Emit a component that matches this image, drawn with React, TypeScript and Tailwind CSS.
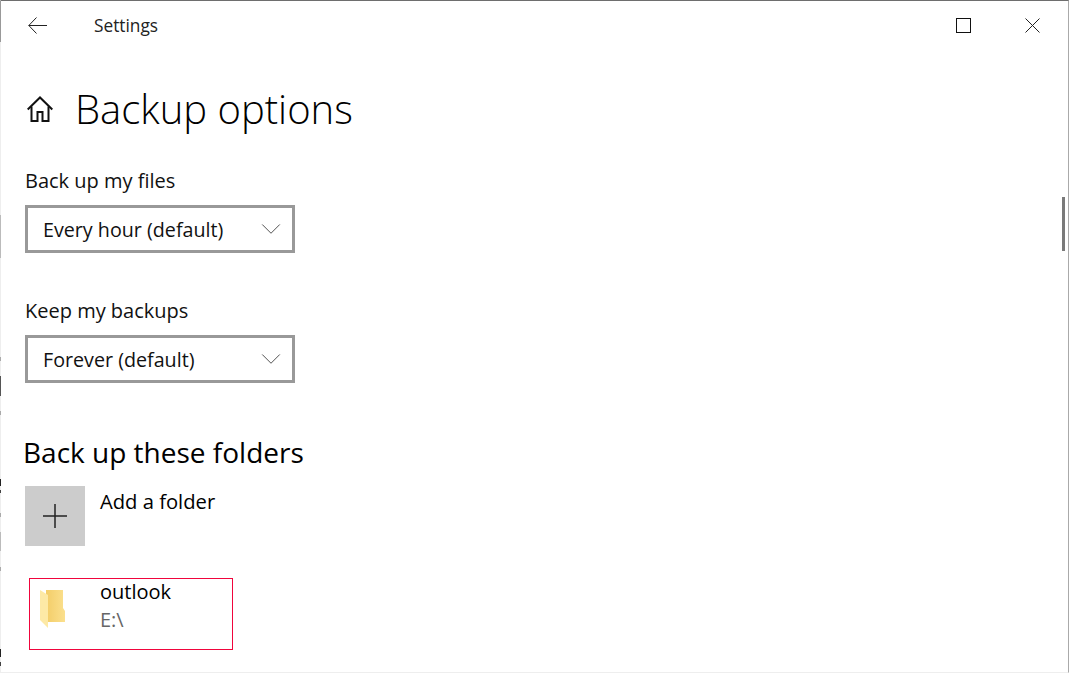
import { ChevronDown } from 'lucide-react';

const font = "font-['Open_Sans','Noto_Sans',sans-serif]";

// bits of the windows behind, showing through on the left edge
const edgeBits = [
  { top: 0, height: 41, color: '#999' },
  { top: 214, height: 43, color: '#bbb' },
  { top: 356, height: 4, color: '#aaa' },
  { top: 375, height: 20, color: '#555' },
  { top: 410, height: 4, color: '#aaa' },
  { top: 478, height: 7, color: '#222' },
  { top: 489, height: 3, color: '#444' },
  { top: 512, height: 4, color: '#aaa' },
  { top: 531, height: 19, color: '#bbb' },
  { top: 566, height: 4, color: '#aaa' },
  { top: 648, height: 8, color: '#222' },
  { top: 661, height: 4, color: '#444' },
];

function Dropdown({ label, value }: { label: string; value: string }) {
  return (
    <div className="flex flex-col">
      <div className="text-[20px] leading-[26px] text-[#111]">{label}</div>
      <div className="mt-[11px] flex h-[48px] w-[270px] items-center justify-between border-[3px] border-[#999] pl-[15px] pr-[4px] text-[19.7px] text-[#111]">
        <span className="mt-[2px]">{value}</span>
        <ChevronDown size={34} strokeWidth={0.6} className="text-[#333]" />
      </div>
    </div>
  );
}

function FolderIcon() {
  return (
    <svg width="28" height="40" viewBox="0 0 28 40" className="blur-[0.4px]">
      <defs>
        <linearGradient id="folderBack" x1="0" y1="0" x2="1" y2="0">
          <stop offset="0" stopColor="#f3cd68" />
          <stop offset="1" stopColor="#fbe08e" />
        </linearGradient>
      </defs>
      <path d="M7 1h17v18l2 3v11H7z" fill="url(#folderBack)" />
      <path d="M1 1l8 5v33l-8-8z" fill="#fde9a6" />
    </svg>
  );
}

function BackIcon() {
  return (
    <svg width="19" height="17" viewBox="0 0 19 17" fill="none" stroke="#222" strokeWidth="1">
      <path d="M0.8 8.5H19M8.5 0.5L0.8 8.5L8.5 16.5" />
    </svg>
  );
}

function HomeIcon() {
  return (
    <svg width="26" height="26" viewBox="0 0 26 26" fill="none" stroke="#111" strokeWidth="2">
      <path d="M0.7 13.5L13 1.5L25.3 13.5" />
      <path d="M4.5 10.5V25H10.5V16H15.5V25H21.5V10.5" />
    </svg>
  );
}

export default function App() {
  return (
    <div className={`relative h-[673px] w-[1069px] border border-[#eee] border-t-[#6e6e6e] border-r-[#aaa] bg-white text-black ${font}`}>
      {edgeBits.map((b) => (
        <div
          key={b.top}
          className="absolute left-[-1px] w-px"
          style={{ top: b.top, height: b.height, background: b.color }}
        />
      ))}

      <div className="flex h-[49px] items-center justify-between">
        <div className="flex items-center">
          <div className="ml-[27px]">
            <BackIcon />
          </div>
          <span className="ml-[47px] text-[17.3px] text-[#222]">Settings</span>
        </div>
        <div className="flex items-center gap-[54px] pr-[28px]">
          <svg width="15" height="15" viewBox="0 0 15 15" fill="none" stroke="#111" strokeWidth="1">
            <rect x="0.5" y="0.5" width="14" height="14" />
          </svg>
          <svg width="15" height="15" viewBox="0 0 15 15" fill="none" stroke="#222" strokeWidth="1">
            <path d="M0.5 0.5L14.5 14.5M14.5 0.5L0.5 14.5" />
          </svg>
        </div>
      </div>

      <div className="mt-[34px] flex items-center pl-[26px]">
        <HomeIcon />
        <h1 className="ml-[22px] text-[40px] leading-[50px] font-light">Backup options</h1>
      </div>

      <div className="mt-[34px] flex flex-col gap-[45px] pl-[24px]">
        <Dropdown label="Back up my files" value="Every hour (default)" />
        <Dropdown label="Keep my backups" value="Forever (default)" />
      </div>

      <h2 className="mt-[49px] pl-[22px] text-[28px] leading-[40px]">Back up these folders</h2>

      <div className="mt-[14px] flex pl-[24px]">
        <div className="flex h-[60px] w-[60px] items-center justify-center bg-[#ccc]">
          <svg width="24" height="24" viewBox="0 0 24 24" stroke="#222" strokeWidth="1.5">
            <path d="M0 12H24M12 0V24" />
          </svg>
        </div>
        <div className="ml-[15px] text-[20.2px] leading-[30px]">Add a folder</div>
      </div>

      <div className="mt-[32px] ml-[28px] flex h-[72px] w-[204px] border border-[#f0043c] pl-[9px]">
        <div className="mt-[10px]">
          <FolderIcon />
        </div>
        <div className="ml-[33px] flex flex-col">
          <span className="text-[20px] leading-[26px]">outlook</span>
          <span className="mt-[2px] text-[20px] leading-[26px] text-[#666]">E:\</span>
        </div>
      </div>

      <div className="absolute top-[196px] right-[3px] h-[54px] w-[3px] bg-[#7a7a7a]" />
    </div>
  );
}
